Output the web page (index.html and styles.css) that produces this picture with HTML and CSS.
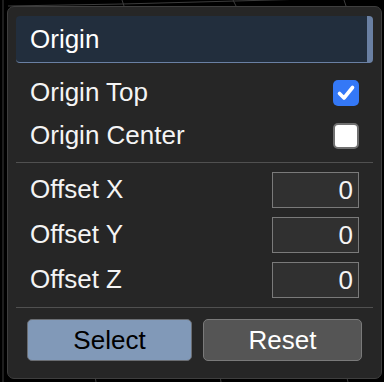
FILE: index.html
```html
<!DOCTYPE html>
<html>
<head>
<meta charset="utf-8">
<link rel="stylesheet" href="styles.css">
</head>
<body>
<svg class="scene" width="384" height="382" viewBox="0 0 384 382">
  <g stroke="#3c3c3c" stroke-width="1" fill="none">
    <polyline points="3,0 3,382"/>
    <polyline points="8,6 122,4 235,1 345,-2"/>
    <polyline points="122,0 124,6"/>
    <polyline points="233,0 236,6"/>
    <polyline points="344,0 346,6"/>
    <polyline points="95,376 96,382"/>
    <polyline points="220,376 221,382"/>
    <polyline points="347,378 348,382"/>
  </g>
</svg>
<div class="panel">
  <div class="header">Origin</div>
  <div class="row check-row">
    <span class="label">Origin Top</span>
    <span class="checkbox checked">
      <svg width="26" height="26" viewBox="0 0 26 26"><path d="M6.5 13.5 L11 18 L19.5 7.5" stroke="#fff" stroke-width="3.6" fill="none" stroke-linecap="round" stroke-linejoin="round"/></svg>
    </span>
  </div>
  <div class="row check-row">
    <span class="label">Origin Center</span>
    <span class="checkbox"></span>
  </div>
  <div class="sep sep-a"></div>
  <div class="row num-row">
    <span class="label">Offset X</span>
    <span class="num">0</span>
  </div>
  <div class="row num-row">
    <span class="label">Offset Y</span>
    <span class="num">0</span>
  </div>
  <div class="row num-row">
    <span class="label">Offset Z</span>
    <span class="num">0</span>
  </div>
  <div class="sep sep-b"></div>
  <div class="buttons">
    <button class="btn btn-select">Select</button>
    <button class="btn btn-reset">Reset</button>
  </div>
</div>
</body>
</html>
```
FILE: styles.css
```css
html, body {
  margin: 0;
  padding: 0;
  background: #000;
  width: 384px;
  height: 382px;
  overflow: hidden;
}
body {
  position: relative;
  font-family: "Liberation Sans", Arial, sans-serif;
  color: #f4f4f4;
}
.scene {
  position: absolute;
  left: 0;
  top: 0;
}
.panel {
  position: relative;
  margin: 6px 0 0 7px;
  width: 375px;
  height: 373px;
  box-sizing: border-box;
  background: #262626;
  border: 1px solid #3e3e3e;
  border-radius: 7px;
  padding: 9px 8px 0 8px;
}
.header {
  height: 46px;
  background: #222e3d;
  border-right: 6px solid #6a80a3;
  border-bottom: 1px solid #6a80a3;
  border-radius: 4px;
  display: flex;
  align-items: center;
  padding-left: 14px;
  font-size: 26px;
  color: #fff;
}
.row {
  display: flex;
  align-items: center;
  justify-content: space-between;
  padding: 0 14px;
  font-size: 26px;
}
.check-row {
  height: 43px;
}
.check-row:first-of-type {
  margin-top: 0;
}
.header + .row {
  margin-top: 8px;
}
.checkbox {
  width: 26px;
  height: 26px;
  box-sizing: border-box;
  border-radius: 5px;
  background: #fff;
  border: 2px solid #707070;
  display: flex;
}
.checkbox.checked {
  background: #3478f6;
  border: none;
}
.sep {
  height: 1px;
  background: #505050;
}
.sep-a {
  margin-top: 5px;
  margin-bottom: 4px;
}
.num-row {
  height: 45px;
}
.num {
  width: 87px;
  height: 36px;
  box-sizing: border-box;
  border: 1px solid #7a7a7a;
  background: #303030;
  text-align: right;
  padding-right: 5px;
  line-height: 34px;
  font-size: 26px;
}
.sep-b {
  margin-top: 5px;
}
.buttons {
  display: flex;
  margin-top: 11px;
  padding-left: 11px;
  gap: 11px;
}
.btn {
  height: 42px;
  box-sizing: border-box;
  border-radius: 5px;
  font-family: "Liberation Sans", Arial, sans-serif;
  font-size: 26px;
  padding: 0;
}
.btn-select {
  width: 165px;
  background: #8199b8;
  border: 1px solid #6a6d72;
  color: #000;
}
.btn-reset {
  width: 159px;
  background: #555555;
  border: 1px solid #7a7a7a;
  color: #fff;
}
```
